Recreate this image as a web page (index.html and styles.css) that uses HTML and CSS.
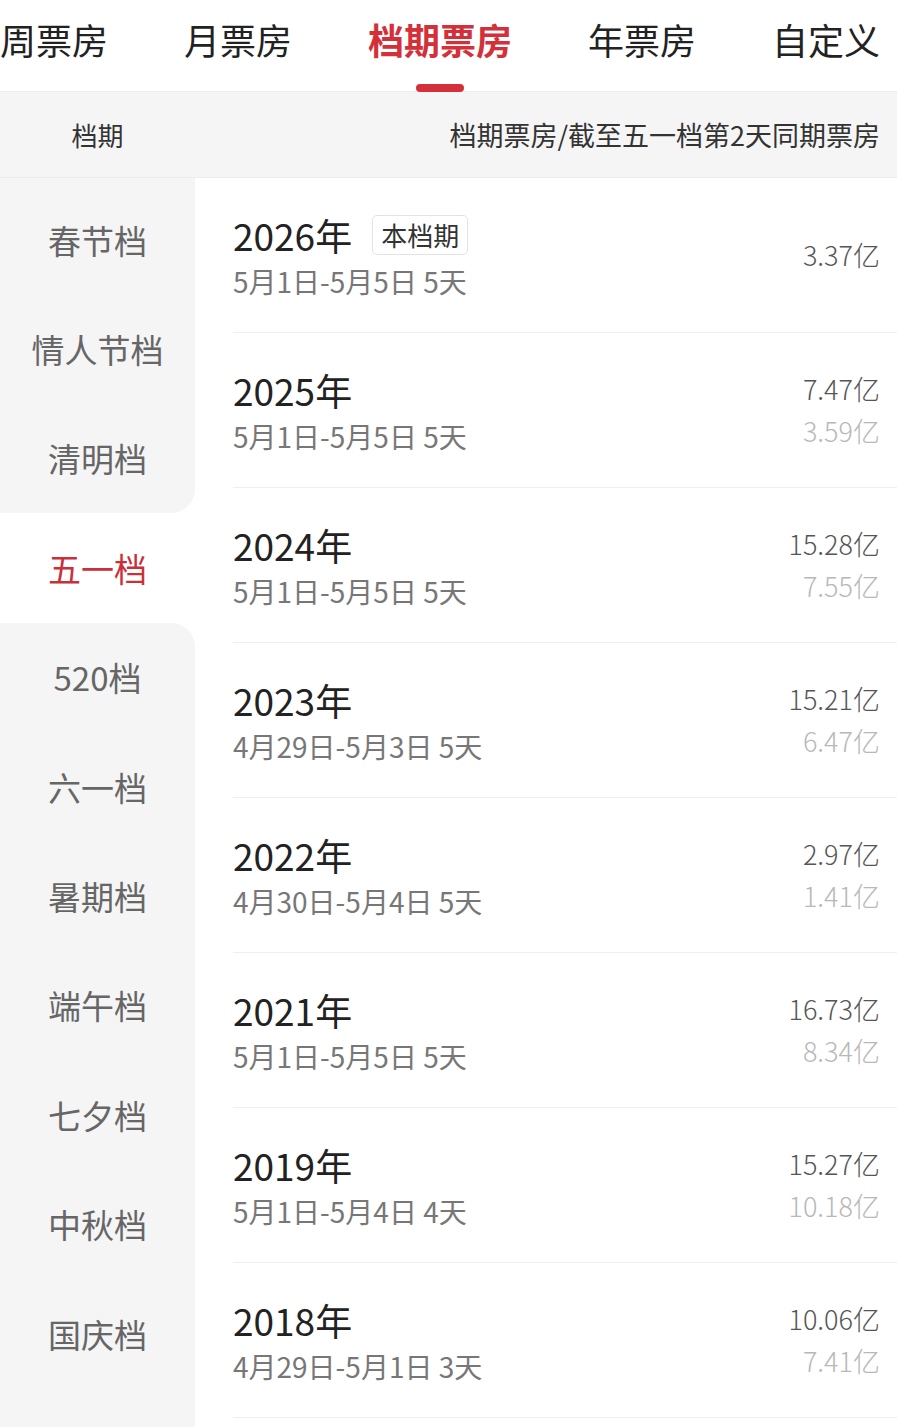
FILE: index.html
```html
<!DOCTYPE html>
<html lang="zh-CN">
<head>
<meta charset="utf-8">
<title>档期票房</title>
<link rel="stylesheet" href="styles.css">
</head>
<body>
<div class="page">
  <nav class="tabs">
    <div class="tab">周票房</div>
    <div class="tab">月票房</div>
    <div class="tab active">档期票房</div>
    <div class="tab">年票房</div>
    <div class="tab">自定义</div>
  </nav>
  <div class="head">
    <div class="head-left">档期</div>
    <div class="head-right">档期票房/截至五一档第2天同期票房</div>
  </div>
  <div class="body">
    <aside class="side">
      <div class="side-top"></div>
      <div class="side-item">春节档</div>
      <div class="side-item">情人节档</div>
      <div class="side-item before">清明档</div>
      <div class="side-item active">五一档</div>
      <div class="side-item after">520档</div>
      <div class="side-item">六一档</div>
      <div class="side-item">暑期档</div>
      <div class="side-item">端午档</div>
      <div class="side-item">七夕档</div>
      <div class="side-item">中秋档</div>
      <div class="side-item">国庆档</div>
      <div class="side-fill"></div>
    </aside>
    <main class="list">
      <div class="row">
        <div class="info">
          <div class="title">2026年<span class="badge">本档期</span></div>
          <div class="date">5月1日-5月5日 5天</div>
        </div>
        <div class="vals"><div class="v1">3.37亿</div></div>
      </div>
      <div class="row">
        <div class="info">
          <div class="title">2025年</div>
          <div class="date">5月1日-5月5日 5天</div>
        </div>
        <div class="vals"><div class="v1">7.47亿</div><div class="v2">3.59亿</div></div>
      </div>
      <div class="row">
        <div class="info">
          <div class="title">2024年</div>
          <div class="date">5月1日-5月5日 5天</div>
        </div>
        <div class="vals"><div class="v1">15.28亿</div><div class="v2">7.55亿</div></div>
      </div>
      <div class="row">
        <div class="info">
          <div class="title">2023年</div>
          <div class="date">4月29日-5月3日 5天</div>
        </div>
        <div class="vals"><div class="v1">15.21亿</div><div class="v2">6.47亿</div></div>
      </div>
      <div class="row">
        <div class="info">
          <div class="title">2022年</div>
          <div class="date">4月30日-5月4日 5天</div>
        </div>
        <div class="vals"><div class="v1">2.97亿</div><div class="v2">1.41亿</div></div>
      </div>
      <div class="row">
        <div class="info">
          <div class="title">2021年</div>
          <div class="date">5月1日-5月5日 5天</div>
        </div>
        <div class="vals"><div class="v1">16.73亿</div><div class="v2">8.34亿</div></div>
      </div>
      <div class="row">
        <div class="info">
          <div class="title">2019年</div>
          <div class="date">5月1日-5月4日 4天</div>
        </div>
        <div class="vals"><div class="v1">15.27亿</div><div class="v2">10.18亿</div></div>
      </div>
      <div class="row">
        <div class="info">
          <div class="title">2018年</div>
          <div class="date">4月29日-5月1日 3天</div>
        </div>
        <div class="vals"><div class="v1">10.06亿</div><div class="v2">7.41亿</div></div>
      </div>
    </main>
  </div>
</div>
</body>
</html>
```

FILE: styles.css
```css
* { box-sizing: border-box; }
html, body {
  margin: 0;
  padding: 0;
  background: #fff;
  font-family: "Noto Sans CJK SC", "Noto Sans", sans-serif;
}
body { height: 1427px; overflow: hidden; }
.page { width: 897px; }

.tabs {
  height: 92px;
  display: flex;
  gap: 76px;
  border-bottom: 1px solid #ececec;
  white-space: nowrap;
}
.tab {
  position: relative;
  font-size: 36px;
  line-height: 78px;
  color: #222;
}
.tab.active {
  color: #d3303a;
  font-weight: 700;
}
.tab.active::after {
  content: "";
  position: absolute;
  left: 50%;
  top: 84px;
  width: 48px;
  height: 8px;
  margin-left: -24px;
  border-radius: 4px;
  background: #d3303a;
}

.head {
  height: 86px;
  background: #f5f5f5;
  display: flex;
  align-items: center;
  justify-content: space-between;
  padding-right: 17px;
  border-bottom: 1px solid #ececec;
  font-size: 27px;
  color: #333;
}
.head-left {
  width: 195px;
  text-align: center;
  font-size: 26px;
}

.body {
  display: flex;
  height: 1250px;
}
.side {
  width: 195px;
  flex: none;
  display: flex;
  flex-direction: column;
  background: #fff;
}
.side-top {
  height: 7px;
  background: #f5f5f5;
}
.side-item {
  height: 109.4px;
  flex: none;
  display: flex;
  align-items: center;
  justify-content: center;
  font-size: 33px;
  color: #666;
  background: #f5f5f5;
}
.side-item.before { border-bottom-right-radius: 24px; }
.side-item.after { border-top-right-radius: 24px; }
.side-item.active {
  background: #fff;
  color: #c9303a;
}
.side-fill {
  flex: 1;
  background: #f5f5f5;
}

.list {
  flex: 1;
  padding-left: 38px;
}
.row {
  height: 155px;
  border-bottom: 1px solid #efefef;
  display: flex;
  justify-content: space-between;
  align-items: center;
  padding-right: 17px;
}
.info {
  display: flex;
  flex-direction: column;
  padding-top: 2px;
}
.title {
  display: flex;
  align-items: center;
  font-size: 37px;
  line-height: 50px;
  color: #222;
}
.badge {
  margin-left: 20px;
  height: 40px;
  padding: 0 8px;
  border: 1px solid #e3e3e3;
  border-radius: 5px;
  font-size: 26px;
  line-height: 38px;
  color: #333;
}
.date {
  font-size: 28px;
  line-height: 42px;
  color: #777;
}
.vals {
  text-align: right;
  font-size: 27px;
  line-height: 42px;
  font-weight: 300;
}
.v1 { color: #555; }
.v2 { color: #b8b8b8; }
```
